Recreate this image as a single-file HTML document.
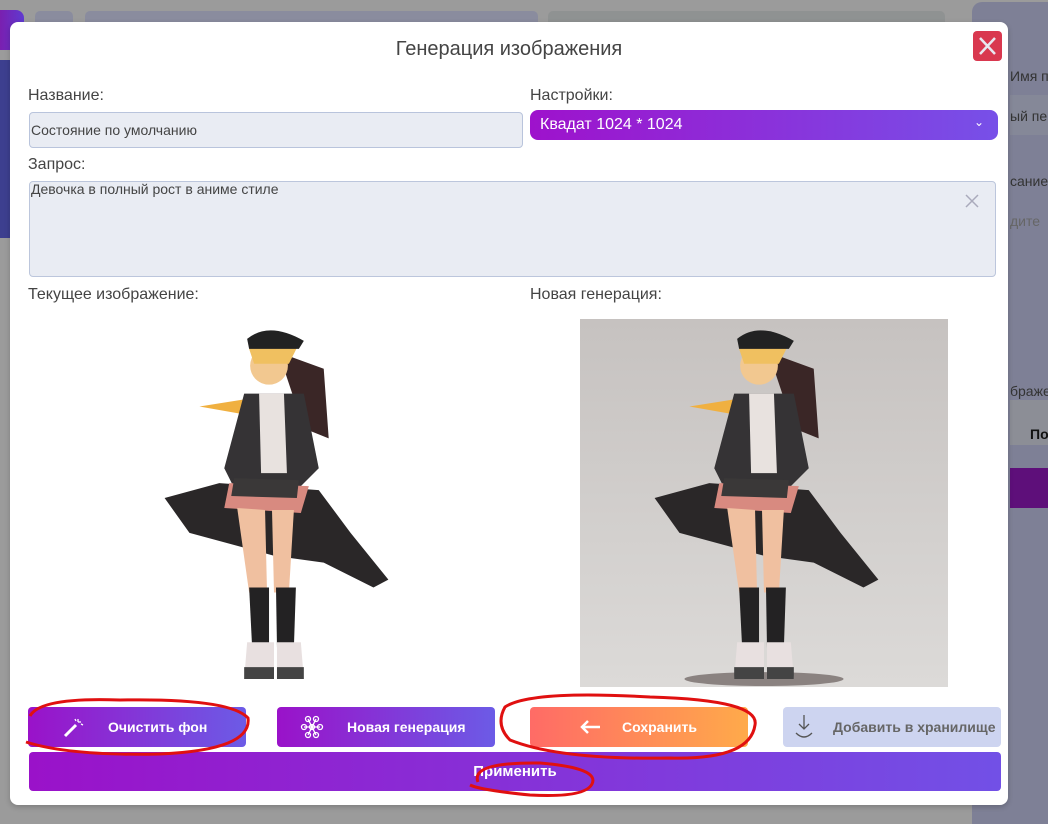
<!DOCTYPE html>
<html><head><meta charset="utf-8"><style>
*{box-sizing:border-box;margin:0;padding:0}
body{width:1048px;height:824px;background:#9b9b9b;position:relative;overflow:hidden;font-family:"Liberation Sans","DejaVu Sans",sans-serif}
.abs{position:absolute;white-space:nowrap}
.lbl{position:absolute;font-size:16px;color:#444;}
.btn{position:absolute;height:40px;border-radius:4px;color:#fff;font-weight:bold;font-size:14px;display:flex;align-items:center}
.grad{background:linear-gradient(90deg,#9a12c9,#6c5be6)}
</style></head><body>
<div class="abs" style="left:0;top:10px;width:24px;height:40px;background:linear-gradient(90deg,#7a1fb0,#5f3ad0);border-radius:0 8px 8px 0"></div>
<div class="abs" style="left:0;top:60px;width:10px;height:178px;background:#3d3f8f"></div>
<div class="abs" style="left:35px;top:11px;width:38px;height:20px;background:#8a8c9e;border-radius:5px"></div>
<div class="abs" style="left:85px;top:11px;width:453px;height:20px;background:#8a8c9e;border-radius:5px"></div>
<div class="abs" style="left:548px;top:11px;width:397px;height:20px;background:#8f9292;border-radius:5px"></div>
<div class="abs" style="left:972px;top:2px;width:76px;height:822px;background:#7e8096;border-radius:10px 0 0 0;overflow:hidden">
<div class="abs" style="left:38px;top:93px;width:38px;height:40px;background:#858898"></div>
<div class="abs" style="left:38px;top:398px;width:38px;height:45px;background:#8c8e96"></div>
<div class="abs" style="left:38px;top:466px;width:38px;height:40px;background:#5e0f7a"></div>
<div class="abs" style="left:38px;top:66px;font-size:14px;color:#333">Имя п</div>
<div class="abs" style="left:38px;top:106px;font-size:14px;color:#333">ый пер</div>
<div class="abs" style="left:38px;top:171px;font-size:14px;color:#333">сание</div>
<div class="abs" style="left:38px;top:211px;font-size:14px;color:#666">дите</div>
<div class="abs" style="left:38px;top:381px;font-size:14px;color:#333">браже</div>
<div class="abs" style="left:58px;top:424px;font-size:14px;color:#111;font-weight:bold">По</div>
</div>
<div class="abs" style="left:10px;top:22px;width:998px;height:783px;background:#fff;border-radius:8px;box-shadow:0 2px 6px rgba(0,0,0,.2)"></div>
<div class="abs" style="left:0;top:38px;width:1018px;text-align:center;font-size:20px;color:#444">Генерация изображения</div>
<div class="abs" style="left:973px;top:31px;width:29px;height:30px;background:#d9384f;border-radius:4px"><svg width="29" height="30"><path d="M7 7L22 23M22 7L7 23" stroke="#e8e8f0" stroke-width="2.5"/></svg></div>
<div class="lbl" style="left:28px;top:87px">Название:</div>
<div class="lbl" style="left:530px;top:87px">Настройки:</div>
<div class="abs" style="left:29px;top:112px;width:494px;height:36px;border:1.5px solid #b9c4dc;border-radius:4px;background:#e9ecf3;font-size:14px;color:#444;padding:9px 0 0 1px">Состояние по умолчанию</div>
<div class="abs" style="left:530px;top:110px;width:468px;height:30px;border-radius:8px;background:linear-gradient(90deg,#9e12cc,#7750e8);color:#fff;font-size:16px;padding:6px 0 0 10px">Квадат 1024 * 1024<span style="position:absolute;right:14px;top:5px;font-size:12px">&#8964;</span></div>
<div class="lbl" style="left:28px;top:156px">Запрос:</div>
<div class="abs" style="left:29px;top:181px;width:967px;height:96px;border:1.5px solid #bcc6dc;border-radius:4px;background:#e9ecf3;font-size:14px;color:#444;padding:0 0 0 1px;line-height:14px">Девочка в полный рост в аниме стиле<svg class="abs" style="right:15px;top:11px" width="16" height="16"><path d="M2 2L14 14M14 2L2 14" stroke="#aab" stroke-width="1.5"/></svg></div>
<div class="lbl" style="left:28px;top:286px">Текущее изображение:</div>
<div class="lbl" style="left:530px;top:286px">Новая генерация:</div>
<svg class="abs" style="left:580px;top:319px" width="368" height="368" viewBox="0 0 370 370">
<defs><linearGradient id="bg" x1="0" y1="0" x2="0" y2="1"><stop offset="0" stop-color="#c6c2c0"/><stop offset="1" stop-color="#dcdad8"/></linearGradient></defs>
<rect width="370" height="370" fill="url(#bg)"/>
<ellipse cx="185" cy="362" rx="80" ry="7" fill="#8a8280"/>
<g id="fig">
<path d="M75 180L130 165L230 172L262 215L300 262L285 270L235 245L185 238L100 215Z" fill="#2a2728"/>
<path d="M110 88L160 80L150 95Z" fill="#f0b040"/>
<path d="M180 30L235 50L240 120L215 110L195 50Z" fill="#3a2626"/>
<circle cx="180" cy="47" r="19" fill="#f2c890"/>
<path d="M160 30Q180 8 210 25L200 45L165 45Z" fill="#f0c060"/>
<path d="M158 20Q180 2 215 22L210 30L160 30Z" fill="#222"/>
<path d="M155 75L215 75L230 150L210 170L145 170L135 150Z" fill="#353335"/>
<path d="M170 75L195 75L198 155L172 155Z" fill="#e8e2df"/>
<path d="M140 165L220 168L212 195L135 190Z" fill="#d88a80"/>
<path d="M145 160L210 162L208 180L142 178Z" fill="#3a3838"/>
<path d="M148 190L176 192L178 275L160 275Z" fill="#f0c0a0"/>
<path d="M183 192L205 192L200 275L185 275Z" fill="#f0c0a0"/>
<path d="M160 270L180 270L180 330L163 330Z" fill="#232223"/>
<path d="M187 270L207 270L205 330L188 330Z" fill="#232223"/>
<path d="M158 325L185 325L185 362L155 362Z" fill="#e8e0e0"/>
<path d="M188 325L212 325L215 362L188 362Z" fill="#e8e0e0"/>
<path d="M155 350L185 350L185 362L155 362ZM188 350L215 350L215 362L188 362Z" fill="#444"/>
</g>
</svg>
<svg class="abs" style="left:90px;top:319px" width="368" height="368" viewBox="0 0 370 370"><use href="#fig"/></svg>
<div class="btn grad" style="left:28px;top:707px;width:218px"><svg style="margin-left:34px" width="22" height="22"><path d="M3 20L14 9" stroke="#fff" stroke-width="3"/><path d="M16 3v3M19 6h-3M21 9l-2-1M13 3l1 2" stroke="#fff" stroke-width="1.3"/></svg><span style="margin-left:24px">Очистить фон</span></div>
<div class="btn grad" style="left:277px;top:707px;width:218px"><svg style="margin-left:22px" width="26" height="26" fill="none" stroke="#fff" stroke-width="1.3"><circle cx="9" cy="5" r="2.5"/><circle cx="17" cy="5" r="2.5"/><circle cx="5" cy="13" r="2.5"/><circle cx="13" cy="13" r="2.5"/><circle cx="21" cy="13" r="2.5"/><circle cx="9" cy="21" r="2.5"/><circle cx="17" cy="21" r="2.5"/><path d="M9 5L13 13L17 5M5 13H21M9 21L13 13L17 21"/></svg><span style="margin-left:22px">Новая генерация</span></div>
<div class="btn" style="left:530px;top:707px;width:218px;background:linear-gradient(90deg,#ff6b66,#ffaa4a)"><svg style="margin-left:50px" width="22" height="16"><path d="M2 8H20M8 2L2 8L8 14" stroke="#fff" stroke-width="2.5" fill="none"/></svg><span style="margin-left:20px">Сохранить</span></div>
<div class="btn" style="left:783px;top:707px;width:218px;background:#cdd4f0;color:#666"><svg style="margin-left:10px" width="22" height="28" fill="none" stroke="#555" stroke-width="1.3"><path d="M11 2V16M6 11L11 16L16 11M3 20Q11 28 19 20"/></svg><span style="margin-left:18px">Добавить в хранилище</span></div>
<div class="btn grad" style="left:29px;top:752px;width:972px;height:39px;justify-content:center;font-size:15px;background:linear-gradient(90deg,#9a12c9,#7250e6)">Применить</div>
<svg class="abs" style="left:0;top:0" width="1048" height="824" fill="none" stroke="#e01010" stroke-width="3">
<path d="M30 716Q40 697 120 700Q230 698 248 718Q252 750 160 754Q70 756 26 742"/>
<path d="M505 707Q530 690 650 697Q760 700 755 725Q750 760 670 758Q560 760 510 740Q495 725 505 707Z"/>
<path d="M478 782Q470 762 540 763Q600 768 592 784Q585 798 530 795Q480 790 470 785"/>
</svg>
</body></html>
